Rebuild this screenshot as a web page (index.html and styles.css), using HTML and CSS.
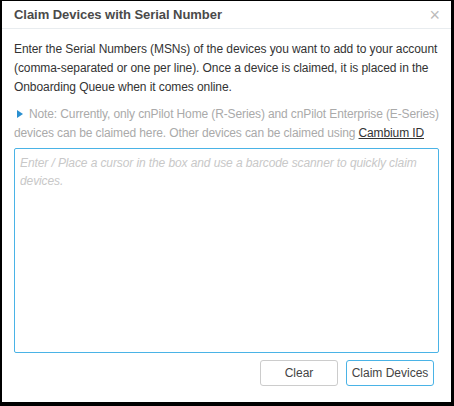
FILE: index.html
```html
<!DOCTYPE html>
<html>
<head>
<meta charset="utf-8">
<link rel="stylesheet" href="styles.css">
</head>
<body>
<div class="frame">
  <div class="header">
    <div class="title">Claim Devices with Serial Number</div>
    <div class="close">&#215;</div>
  </div>
  <div class="body">
    <p class="intro">Enter the Serial Numbers (MSNs) of the devices you want to add to your account (comma-separated or one per line). Once a device is claimed, it is placed in the Onboarding Queue when it comes online.</p>
    <p class="note"><span class="tri"></span>Note: Currently, only cnPilot Home (R-Series) and cnPilot Enterprise <span class="nw">(E-Series)</span> devices can be claimed here. Other devices can be claimed using <a class="link">Cambium ID</a></p>
    <textarea class="input" placeholder="Enter / Place a cursor in the box and use a barcode scanner to quickly claim devices."></textarea>
    <div class="actions">
      <button class="btn clear">Clear</button>
      <button class="btn primary">Claim Devices</button>
    </div>
  </div>
</div>
</body>
</html>
```
FILE: styles.css
```css
html, body { margin: 0; padding: 0; background: #000; }
body { width: 454px; height: 406px; overflow: hidden; }
.frame {
  box-sizing: border-box;
  width: 454px; height: 406px;
  border-style: solid; border-color: #000;
  border-width: 1px 3px 4px 2px;
  background: #fff;
  font-family: "Liberation Sans", Arial, sans-serif;
  color: #333;
  display: flex; flex-direction: column;
}
.header {
  height: 27px;
  border-bottom: 1px solid #e8ecef;
  display: flex; align-items: center; justify-content: space-between;
  padding: 0 12px;
}
.title { font-size: 13px; font-weight: bold; color: #4a4a4a; letter-spacing: -0.05px; }
.close { font-size: 18px; color: #bbb; line-height: 1; margin-right: -1px; }
.body { padding: 11px 12px 0 12px; display: flex; flex-direction: column; flex: 1; }
.intro { margin: 0; font-size: 12px; letter-spacing: -0.08px; line-height: 19px; color: #333; }
.note { margin: 8px 0 0 0; font-size: 12px; letter-spacing: -0.12px; line-height: 19px; color: #aaa; }
.nw { white-space: nowrap; }
.tri {
  display: inline-block; width: 0; height: 0;
  border-left: 6px solid #2a8fd0;
  border-top: 4.5px solid transparent; border-bottom: 4.5px solid transparent;
  margin: 0 6px 0 3px; vertical-align: 0px;
}
.link { color: #333; text-decoration: underline; }
.input {
  box-sizing: border-box;
  margin: 5px 0 0 0;
  width: 425px; height: 205px;
  border: 1px solid #4ab3e6; border-radius: 2px;
  resize: none; outline: none;
  padding: 5px 5px;
  font-family: "Liberation Sans", Arial, sans-serif;
  font-size: 12px; letter-spacing: -0.1px; line-height: 18px; font-style: italic;
}
.input::placeholder { color: #c8c8c8; }
.actions { display: flex; justify-content: flex-end; gap: 8px; margin-top: 7px; padding-right: 5px; }
.btn {
  box-sizing: border-box;
  height: 26px; padding: 0;
  white-space: nowrap;
  background: #fff; border: 1px solid #ccc; border-radius: 3px;
  font-family: "Liberation Sans", Arial, sans-serif; font-size: 12px; color: #444;
}
.clear { width: 78px; }
.primary { border-color: #4ab3e6; width: 88px; }
```
